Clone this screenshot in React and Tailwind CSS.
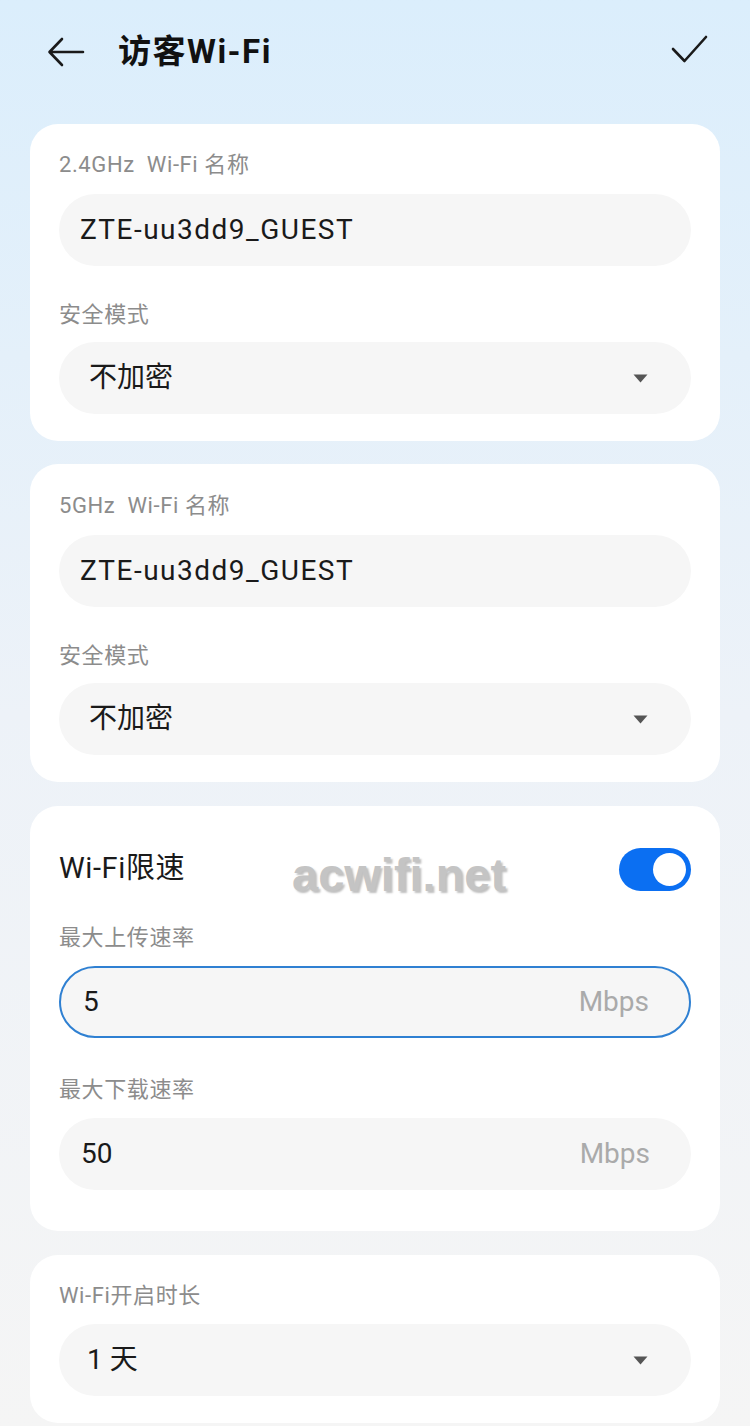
import React from "react";

const FONT = { fontFamily: 'Roboto, "Noto Sans CJK SC", sans-serif' };

function Label({ children, className = "" }) {
  return (
    <div className={"h-[28px] leading-[28px] text-[22px] tracking-[0.6px] text-[#8c8c8c] " + className}>
      {children}
    </div>
  );
}

function Caret() {
  return (
    <svg width="15" height="9" viewBox="0 0 15 9" className="mr-[43px]">
      <path d="M0.5 0.5 H14.5 L7.5 8.5 Z" fill="#555555" />
    </svg>
  );
}

function Field({ children, right, focused }) {
  return (
    <div
      className={
        "h-[72px] rounded-full bg-[#f6f6f6] flex items-center justify-between " +
        (focused ? "border-2 border-[#2f80d2]" : "")
      }
    >
      {children}
      {right}
    </div>
  );
}

function Select({ value, pl = "pl-[30px]" }) {
  return (
    <Field right={<Caret />}>
      <span className={"text-[28px] text-[#1a1a1a] " + pl}>{value}</span>
    </Field>
  );
}

function Card({ children, className = "" }) {
  return (
    <div className={"mx-[30px] bg-white rounded-[28px] px-[29px] " + className}>
      {children}
    </div>
  );
}

export default function App() {
  return (
    <div
      className="w-[750px] h-[1426px] overflow-hidden bg-gradient-to-b from-[#dbeefc] via-[#edf2f8] to-[#f5f5f5]"
      style={FONT}
    >
      {/* header */}
      <div className="h-[124px] flex items-start justify-between pt-[30px]">
        <div className="flex items-center">
          <svg width="40" height="40" viewBox="0 0 40 40" className="ml-[46px]">
            <path
              d="M37 20 H4 M16 7 L3.5 20 L16 33"
              fill="none"
              stroke="#1a1a1a"
              strokeWidth="2.6"
              strokeLinecap="round"
              strokeLinejoin="round"
            />
          </svg>
          <span className="ml-[32px] text-[33px] tracking-[1.5px] font-bold text-[#111] leading-[44px]">
            访客Wi-Fi
          </span>
        </div>
        <svg width="40" height="32" viewBox="0 0 40 32" className="mr-[40px] mt-[3px]">
          <path
            d="M3 16 L14.5 28 L36 4"
            fill="none"
            stroke="#1a1a1a"
            strokeWidth="2.6"
            strokeLinecap="round"
            strokeLinejoin="round"
          />
        </svg>
      </div>

      {/* card 1 */}
      <Card className="pt-[27px] pb-[27px]">
        <Label className="mb-[15px]">2.4GHz&nbsp; Wi-Fi 名称</Label>
        <Field>
          <span className="pl-[21px] text-[28px] tracking-[1.5px] text-[#1a1a1a]">ZTE-uu3dd9_GUEST</span>
        </Field>
        <Label className="mt-[35px] mb-[13px]">安全模式</Label>
        <Select value="不加密" />
      </Card>

      {/* card 2 */}
      <Card className="mt-[23px] pt-[28px] pb-[27px]">
        <Label className="mb-[15px]">5GHz&nbsp; Wi-Fi 名称</Label>
        <Field>
          <span className="pl-[21px] text-[28px] tracking-[1.5px] text-[#1a1a1a]">ZTE-uu3dd9_GUEST</span>
        </Field>
        <Label className="mt-[35px] mb-[13px]">安全模式</Label>
        <Select value="不加密" />
      </Card>

      {/* card 3 */}
      <Card className="mt-[24px] pt-[41px] pb-[41px] relative">
        <div className="h-[44px] flex items-center justify-between">
          <span className="text-[29px] tracking-[0.6px] text-[#1a1a1a]">Wi-Fi限速</span>
          <div className="w-[72px] h-[43px] rounded-full bg-[#0b6ff2] flex items-center justify-end pr-[5px]">
            <div className="w-[33px] h-[33px] rounded-full bg-white" />
          </div>
        </div>
        <div
          className="absolute left-[262px] top-[34px] text-[47px] font-bold text-[#c4c4c4]"
          style={{ fontFamily: '"Liberation Sans", sans-serif', textShadow: "2px 2px 2px rgba(0,0,0,0.25)" }}
        >
          acwifi.net
        </div>
        <Label className="mt-[33px] mb-[14px]">最大上传速率</Label>
        <Field
          focused
          right={<span className="pr-[40px] text-[28px] text-[#aaaaaa]">Mbps</span>}
        >
          <span className="pl-[22px] text-[28px] text-[#1a1a1a]">5</span>
        </Field>
        <Label className="mt-[38px] mb-[14px]">最大下载速率</Label>
        <Field right={<span className="pr-[41px] text-[28px] text-[#aaaaaa]">Mbps</span>}>
          <span className="pl-[22px] text-[28px] text-[#1a1a1a]">50</span>
        </Field>
      </Card>

      {/* card 4 */}
      <Card className="mt-[24px] pt-[27px] pb-[27px]">
        <Label className="mb-[14px]">Wi-Fi开启时长</Label>
        <Select value="1 天" pl="pl-[28px]" />
      </Card>
    </div>
  );
}
